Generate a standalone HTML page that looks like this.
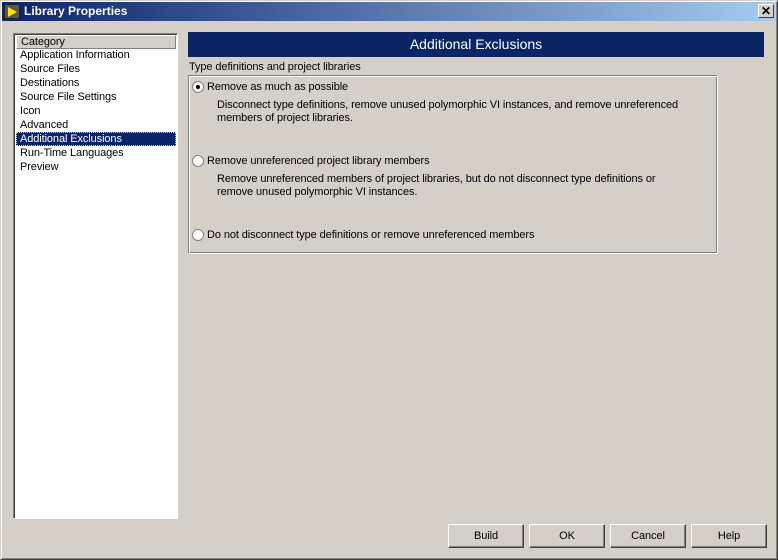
<!DOCTYPE html>
<html><head><style>
*{margin:0;padding:0;box-sizing:border-box}
body{width:778px;height:560px;background:#d4d0c8;font-family:"Liberation Sans",Tahoma,sans-serif;font-size:11px;letter-spacing:-0.1px;color:#000;position:relative;overflow:hidden}
.abs{position:absolute}
.win{left:0;top:0;width:778px;height:560px;border:1px solid;border-color:#d4d0c8 #404040 #404040 #d4d0c8;box-shadow:inset 1px 1px #fff,inset -1px -1px #808080}
.title{left:2px;top:2px;width:773px;height:19px;background:linear-gradient(to right,#0a246a,#a6caf0);color:#fff;font-weight:bold;font-size:12px;line-height:19px;padding-left:22px;letter-spacing:0}
.close{right:4px;top:4px;width:16px;height:14px;background:#d4d0c8;border:1px solid;border-color:#fff #404040 #404040 #fff;font-size:12px;line-height:12px;text-align:center;font-weight:bold;color:#000}
.list{left:13px;top:33px;width:165px;height:486px;background:#fff;border:1px solid;border-color:#808080 #fff #fff #808080;box-shadow:inset 1px 1px #404040}
.hdr{left:2px;top:1px;width:160px;height:14px;background:#d4d0c8;border:1px solid;border-color:#fff #808080 #808080 #fff;padding-left:4px;line-height:12px}
.item{left:2px;width:160px;height:14px;line-height:14px;padding-left:4px}
.sel{background:#0a246a;color:#fff;outline:1px dotted #ffcc55;outline-offset:-1px}
.banner{left:188px;top:32px;width:576px;height:25px;background:#0a2464;color:#fff;font-size:14px;text-align:center;line-height:25px;letter-spacing:0}
.grp{left:188px;top:75px;width:530px;height:179px;border:1px solid;border-color:#808080 #fff #fff #808080;box-shadow:inset 1px 1px #fff,inset -1px -1px #808080}
.radio{width:12px;height:12px;border-radius:50%;background:#fff;border:1px solid #808080}
.dot{left:3px;top:3px;width:4px;height:4px;border-radius:50%;background:#000}
.btn{top:524px;width:76px;height:24px;border:1px solid;border-color:#fff #404040 #404040 #fff;box-shadow:inset -1px -1px #808080;text-align:center;line-height:22px}
</style></head><body>
<div class="abs win"></div>
<div class="abs title">Library Properties</div>
<div class="abs" style="left:4px;top:4px;width:16px;height:15px;background:#555;border:1px solid #222"><div class="abs" style="left:3px;top:2px;width:0;height:0;border-top:5px solid transparent;border-bottom:5px solid transparent;border-left:9px solid #ffe000"></div></div>
<div class="abs close">✕</div>
<div class="abs list">
<div class="abs hdr">Category</div>
<div class="abs item" style="top:14px">Application Information</div>
<div class="abs item" style="top:28px">Source Files</div>
<div class="abs item" style="top:42px">Destinations</div>
<div class="abs item" style="top:56px">Source File Settings</div>
<div class="abs item" style="top:70px">Icon</div>
<div class="abs item" style="top:84px">Advanced</div>
<div class="abs item sel" style="top:98px">Additional Exclusions</div>
<div class="abs item" style="top:112px">Run-Time Languages</div>
<div class="abs item" style="top:126px">Preview</div>
</div>
<div class="abs banner">Additional Exclusions</div>
<div class="abs" style="left:189px;top:61px">Type definitions and project libraries</div>
<div class="abs grp"></div>
<div class="abs radio" style="left:192px;top:81px"><div class="abs dot"></div></div>
<div class="abs" style="left:207px;top:81px">Remove as much as possible</div>
<div class="abs" style="left:217px;top:99px;line-height:13px">Disconnect type definitions, remove unused polymorphic VI instances, and remove unreferenced<br>members of project libraries.</div>
<div class="abs radio" style="left:192px;top:155px"></div>
<div class="abs" style="left:207px;top:155px">Remove unreferenced project library members</div>
<div class="abs" style="left:217px;top:173px;line-height:13px">Remove unreferenced members of project libraries, but do not disconnect type definitions or<br>remove unused polymorphic VI instances.</div>
<div class="abs radio" style="left:192px;top:229px"></div>
<div class="abs" style="left:207px;top:229px">Do not disconnect type definitions or remove unreferenced members</div>
<div class="abs btn" style="left:448px">Build</div>
<div class="abs btn" style="left:529px">OK</div>
<div class="abs btn" style="left:610px">Cancel</div>
<div class="abs btn" style="left:691px">Help</div>
</body></html>
